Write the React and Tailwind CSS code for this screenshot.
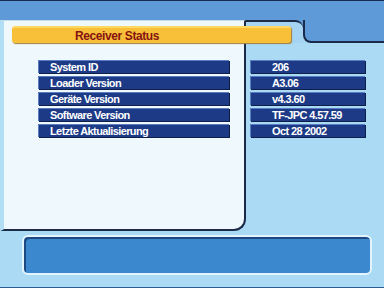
import React from 'react';

const rows = [
  ['System ID', '206'],
  ['Loader Version', 'A3.06'],
  ['Geräte Version', 'v4.3.60'],
  ['Software Version', 'TF-JPC 4.57.59'],
  ['Letzte Aktualisierung', 'Oct 28 2002'],
];

const barCls =
  'h-[13px] flex items-center bg-[#1d3a86] border-l border-t border-[#5a7cc0] text-white font-bold text-[11px] tracking-[-0.6px] leading-none shadow-[1px_1px_0_#0e1f4a]';

const App = () => {
  return (
    <div
      className="w-[384px] h-[288px] overflow-hidden flex flex-col bg-[#aadaf4]"
      style={{ fontFamily: '"Liberation Sans", Arial, sans-serif' }}
    >
      {/* top band */}
      <div className="h-[20px] shrink-0 flex flex-col">
        <div className="h-[1px] bg-[#1a2c50]" />
        <div className="flex-1 bg-[#5e9ad8]" />
      </div>

      {/* main area */}
      <div className="h-[211px] shrink-0 flex">
        {/* left panel */}
        <div className="w-[246px] shrink-0 flex flex-col bg-[#eef8fd] border-l-4 border-l-[#b2def5] border-t border-t-[#c4dcea] border-r-2 border-b-2 border-r-[#1b2a48] border-b-[#1b2a48] rounded-br-[12px]">
          <div className="relative z-10 mt-[5px] ml-[8px] w-[279px] h-[17px] rounded-[3px] bg-[#f8c038] border-t-2 border-[#ffd862] shadow-[1px_1px_1px_#a08040] flex items-center pl-[63px]">
            <span className="text-[12px] font-bold text-[#861212] tracking-[-0.4px] leading-none">Receiver Status</span>
          </div>
          <div className="mt-[17px] ml-[34px] flex flex-col gap-[3px]">
            {rows.map(([label]) => (
              <div key={label} className={`${barCls} w-[191px] pl-[11px]`}>
                {label}
              </div>
            ))}
          </div>
        </div>

        {/* right column */}
        <div className="flex-1 flex flex-col">
          <div className="h-[23px] flex bg-[#5e9ad8]">
            <div className="w-[57px] bg-[#a4d4f2] border-t-2 border-[#1b2a48] rounded-tr-[8px]" />
            <div className="flex-1 bg-[#a4d4f2]">
              <div className="h-full bg-[#5e9ad8] border-l-2 border-b-2 border-[#1b2a48] rounded-bl-[8px]" />
            </div>
          </div>
          <div className="mt-[17px] ml-[4px] flex flex-col gap-[3px]">
            {rows.map(([label, value]) => (
              <div key={label} className={`${barCls} w-[115px] pl-[21px]`}>
                {value}
              </div>
            ))}
          </div>
        </div>
      </div>

      {/* bottom message area */}
      <div className="flex-1 flex flex-col border-b border-[#2a5c90]">
        <div className="mt-[4px] ml-[22px] w-[350px] h-[40px] rounded-[6px] border-2 border-[#e4f4fc] bg-[#3c88cf] shadow-[inset_2px_2px_0_#1e4a82]" />
      </div>
    </div>
  );
};

export default App;
